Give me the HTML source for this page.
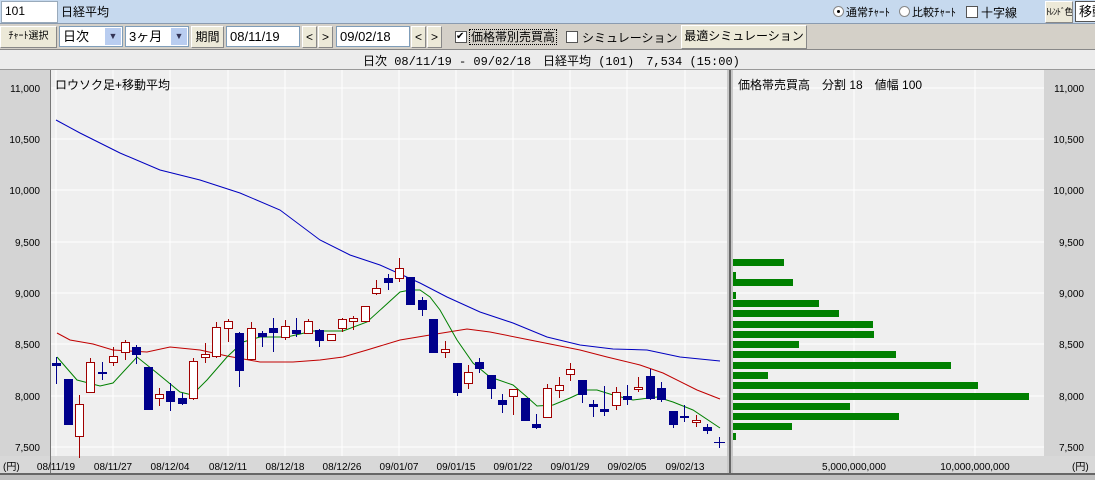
<!DOCTYPE html>
<html><head><meta charset="utf-8">
<style>
*{margin:0;padding:0;box-sizing:border-box}
body{width:1095px;height:480px;overflow:hidden;background:#d4d0c8;font-family:"Liberation Sans","Noto Sans CJK JP",sans-serif;font-size:12px;color:#000;position:relative}
.a{position:absolute;white-space:nowrap}
.r1{left:0;top:0;width:1095px;height:24px;background:#c6d9ee;border-bottom:1px solid #8a9bb0}
.r2{left:0;top:24px;width:1095px;height:26px;background:#d4d0c8;border-bottom:1px solid #888}
.r3{left:0;top:50px;width:1095px;height:20px;background:#ececec;border-bottom:1px solid #999}
.inp{background:#fff;border:1px solid #7f9db9;height:21px;line-height:19px;padding-left:3px;font-size:13px}
.btn{background:#ece9d8;border:1px solid #fff;border-right-color:#888;border-bottom-color:#888;height:22px;line-height:20px;text-align:center;font-size:12px;overflow:hidden}
.cb{width:12px;height:12px;background:#fff;border:1px solid #555}
.sel{background:#fff;border:1px solid #7f9db9;height:21px;line-height:19px;padding-left:3px;font-size:13px}
.arr{position:absolute;right:1px;top:1px;width:16px;height:17px;background:#b9cdf0;color:#335;font-size:9px;text-align:center;line-height:17px}
</style></head><body>
<div class="a r1"></div>
<div class="a inp" style="left:1px;top:1px;width:57px;height:22px;border-color:#9ab;font-size:12px">101</div>
<div class="a" style="left:61px;top:3px;font-size:12px">日経平均</div>
<div class="a" style="left:833px;top:6px;width:11px;height:11px;border-radius:6px;background:#fff;border:1px solid #888"><div style="position:absolute;left:3px;top:3px;width:3px;height:3px;background:#000;border-radius:2px"></div></div>
<div class="a" style="left:846px;top:4px;font-size:11px">通常ﾁｬｰﾄ</div>
<div class="a" style="left:899px;top:6px;width:11px;height:11px;border-radius:6px;background:#fff;border:1px solid #888"></div>
<div class="a" style="left:912px;top:4px;font-size:11px">比較ﾁｬｰﾄ</div>
<div class="a cb" style="left:966px;top:6px"></div>
<div class="a" style="left:981px;top:4px;font-size:12px">十字線</div>
<div class="a btn" style="left:1045px;top:1px;width:28px;font-size:9px;letter-spacing:-1px">ﾄﾚﾝﾄﾞ色</div>
<div class="a inp" style="left:1075px;top:1px;width:30px;border-color:#555">移動</div>

<div class="a r2"></div>
<div class="a btn" style="left:0;top:26px;width:57px;font-size:10px">ﾁｬｰﾄ選択</div>
<div class="a sel" style="left:59px;top:26px;width:64px">日次<div class="arr">▼</div></div>
<div class="a sel" style="left:125px;top:26px;width:64px">3ヶ月<div class="arr">▼</div></div>
<div class="a btn" style="left:191px;top:26px;width:33px">期間</div>
<div class="a inp" style="left:226px;top:26px;width:74px">08/11/19</div>
<div class="a btn" style="left:302px;top:26px;width:15px">&lt;</div>
<div class="a btn" style="left:318px;top:26px;width:15px">&gt;</div>
<div class="a inp" style="left:336px;top:26px;width:74px">09/02/18</div>
<div class="a btn" style="left:411px;top:26px;width:15px">&lt;</div>
<div class="a btn" style="left:427px;top:26px;width:15px">&gt;</div>
<div class="a cb" style="left:455px;top:31px;font-size:10px;line-height:10px">✔</div>
<div class="a" style="left:469px;top:29px;font-size:12px;border:1px dotted #000;padding:0 1px;line-height:14px">価格帯別売買高</div>
<div class="a cb" style="left:566px;top:31px"></div>
<div class="a" style="left:582px;top:29px;font-size:12px">シミュレーション</div>
<div class="a btn" style="left:681px;top:25px;width:126px;height:24px;font-size:12px">最適シミュレーション</div>

<div class="a r3"></div>
<div class="a" style="left:363px;top:52px;font-size:12px;font-family:'Liberation Mono','Noto Sans CJK JP',monospace">日次 08/11/19 - 09/02/18　日経平均 (101)　7,534 (15:00)</div>

<svg class="a" style="left:0;top:70px" width="1095" height="410" id="s"></svg>
<script>
var s=document.getElementById('s'),h='';
function Y(y){return y-70}
h+='<rect x="0" y="0" width="1095" height="410" fill="#d4d0c8"/>';
h+='<rect x="0" y="0" width="50" height="386" fill="#d4d4d4"/>';
h+='<rect x="1044" y="0" width="51" height="386" fill="#d4d4d4"/>';
h+='<rect x="51" y="0" width="676" height="386" fill="#efefef"/>';
h+='<rect x="733" y="0" width="311" height="386" fill="#efefef"/>';
h+='<rect x="51" y="386" width="676" height="17" fill="#d8d8d8"/>';
h+='<rect x="733" y="386" width="311" height="17" fill="#d8d8d8"/>';
h+='<rect x="0" y="386" width="50" height="17" fill="#d8d8d8"/><rect x="1044" y="386" width="51" height="17" fill="#d8d8d8"/>';
h+='<rect x="50" y="0" width="1" height="403" fill="#777"/>';
h+='<rect x="727" y="0" width="6" height="403" fill="#c8c8c8"/><rect x="729" y="0" width="2" height="403" fill="#666"/>';
h+='<rect x="0" y="403" width="1095" height="2" fill="#666"/><rect x="0" y="405" width="1095" height="5" fill="#c0c0c0"/>';
var gy=[88,139,190,242,293,344,396,447],lab=['11,000','10,500','10,000','9,500','9,000','8,500','8,000','7,500'];
gy.forEach(function(y,i){h+='<line x1="51" x2="727" y1="'+Y(y)+'" y2="'+Y(y)+'" stroke="#fff"/><line x1="733" x2="1044" y1="'+Y(y)+'" y2="'+Y(y)+'" stroke="#fff"/>';
h+='<text x="40" y="'+(Y(y)+4)+'" font-size="10" text-anchor="end">'+lab[i]+'</text><text x="1084" y="'+(Y(y)+4)+'" font-size="10" text-anchor="end">'+lab[i]+'</text>';});
var gx=[56,113,170,228,285,342,399,456,513,570,627,685],dl=['08/11/19','08/11/27','08/12/04','08/12/11','08/12/18','08/12/26','09/01/07','09/01/15','09/01/22','09/01/29','09/02/05','09/02/13'];
gx.forEach(function(x,i){h+='<line x1="'+x+'" x2="'+x+'" y1="0" y2="386" stroke="#fff"/><text x="'+x+'" y="400" font-size="10" text-anchor="middle">'+dl[i]+'</text>';});
[854,975].forEach(function(x){h+='<line x1="'+x+'" x2="'+x+'" y1="0" y2="386" stroke="#fff"/>'});
h+='<text x="854" y="400" font-size="10" text-anchor="middle">5,000,000,000</text><text x="975" y="400" font-size="10" text-anchor="middle">10,000,000,000</text>';
h+='<text x="3" y="400" font-size="10">(円)</text><text x="1072" y="400" font-size="10">(円)</text>';
h+='<text x="55" y="19" font-size="12">ロウソク足+移動平均</text><text x="738" y="19" font-size="12">価格帯売買高　分割 18　値幅 100</text>';
var bars=[[259,784],[272,736],[279,793],[292,736],[300,819],[310,839],[321,873],[331,874],[341,799],[351,896],[362,951],[372,768],[382,978],[393,1029],[403,850],[413,899],[423,792],[433,736]];
bars.forEach(function(b){h+='<rect x="733" y="'+Y(b[0])+'" width="'+(b[1]-733)+'" height="7" fill="#008000"/>'});
function pl(p,c){h+='<polyline fill="none" stroke="'+c+'" stroke-width="1" points="'+p.map(function(q){return q[0]+','+Y(q[1])}).join(' ')+'"/>'}
pl([[56,120],[80,133],[120,153],[160,170],[200,180],[240,193],[280,210],[320,240],[350,255],[380,265],[420,283],[447,297],[480,312],[513,323],[547,337],[580,345],[613,349],[647,350],[680,357],[720,361]],'#0000c0');
pl([[57,333],[70,340],[93,344],[113,350],[147,352],[170,347],[200,350],[227,356],[260,362],[293,362],[320,360],[343,357],[367,350],[400,340],[430,335],[467,329],[490,332],[530,340],[580,350],[607,357],[640,365],[663,373],[697,390],[720,399]],'#c00000');
pl([[57,357],[77,380],[100,386],[113,383],[137,357],[157,373],[180,392],[192,395],[207,380],[227,357],[243,342],[260,337],[287,337],[313,331],[343,331],[367,322],[400,292],[410,290],[420,290],[430,297],[440,310],[457,340],[473,363],[490,377],[513,385],[527,397],[537,406],[553,405],[570,398],[587,390],[597,390],[613,395],[633,400],[657,397],[673,402],[693,410],[720,428]],'#008000');
var c=[[56,'B',363,366,357,384],[68,'B',379,425,379,425],[79,'R',404,436,395,458],[90,'R',362,392,358,392],[102,'B',372,374,362,380],[113,'R',356,362,347,366],[125,'R',342,352,340,360],[136,'B',347,355,345,364],[148,'B',367,410,367,410],[159,'R',394,398,388,406],[170,'B',391,402,383,411],[182,'B',398,404,393,405],[193,'R',361,398,358,400],[205,'R',354,357,343,363],[216,'R',327,356,322,358],[228,'R',321,328,319,342],[239,'B',333,371,332,387],[251,'R',328,359,322,360],[262,'B',333,337,331,347],[273,'B',328,333,318,352],[285,'R',326,337,320,340],[296,'B',330,334,318,337],[308,'R',321,333,319,334],[319,'B',330,341,329,347],[331,'R',334,340,334,340],[342,'R',319,328,318,332],[353,'R',318,321,316,330],[365,'R',306,321,306,321],[376,'R',288,293,280,295],[388,'B',278,283,274,290],[399,'R',268,278,258,282],[410,'B',277,305,277,305],[422,'B',300,310,297,316],[433,'B',319,353,319,353],[445,'R',349,352,341,358],[457,'B',363,393,363,396],[468,'R',372,383,365,389],[479,'B',362,369,358,373],[491,'B',375,389,375,399],[502,'B',400,405,394,413],[513,'R',389,396,389,415],[525,'B',398,421,398,421],[536,'B',424,428,414,429],[547,'R',388,417,384,417],[559,'R',385,390,377,398],[570,'R',369,374,363,381],[582,'B',380,395,380,403],[593,'B',404,407,400,417],[604,'B',409,412,386,416],[616,'R',392,405,387,410],[627,'B',396,400,385,405],[638,'R',387,389,377,392],[650,'B',376,399,369,400],[661,'B',388,400,382,402],[673,'B',411,425,411,428],[684,'B',416,418,405,422],[696,'R',420,422,415,427],[707,'B',427,431,424,434]];
c.forEach(function(k){var col=k[1]=='B'?'#00008b':'#a00000';
h+='<line x1="'+(k[0]+.5)+'" x2="'+(k[0]+.5)+'" y1="'+Y(k[4])+'" y2="'+Y(k[5])+'" stroke="'+col+'"/>';
if(k[1]=='B')h+='<rect x="'+(k[0]-4)+'" y="'+Y(k[2])+'" width="9" height="'+Math.max(2,k[3]-k[2])+'" fill="#00008b"/>';
else h+='<rect x="'+(k[0]-3.5)+'" y="'+(Y(k[2])+.5)+'" width="8" height="'+Math.max(2,k[3]-k[2])+'" fill="#fff" stroke="#a00000"/>';});
h+='<line x1="719.5" x2="719.5" y1="'+Y(437)+'" y2="'+Y(448)+'" stroke="#00008b"/><line x1="714" x2="725" y1="'+(Y(442)+.5)+'" y2="'+(Y(442)+.5)+'" stroke="#00008b"/>';
s.innerHTML=h;
</script>
</body></html>
